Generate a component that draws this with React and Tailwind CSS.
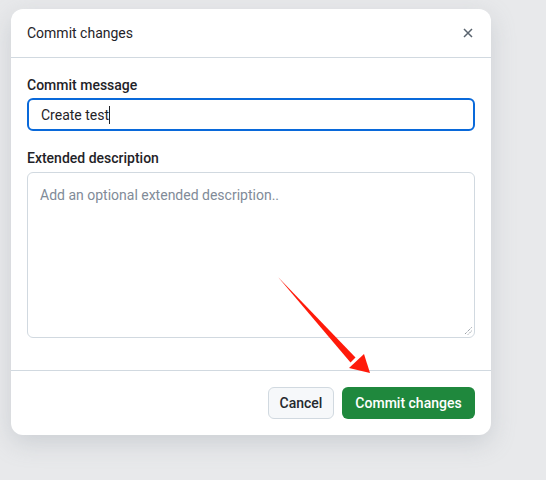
export default function App() {
  return (
    <div
      className="w-[546px] h-[480px] bg-[#e8e9eb] pt-[9px] pl-[11px]"
      style={{ fontFamily: 'Roboto, "Liberation Sans", sans-serif' }}
    >
      <div className="relative w-[480px] bg-white rounded-xl shadow-[0_8px_24px_rgba(140,149,159,0.3)] text-[#1f2328]">
        <div className="flex items-center justify-between h-[49px] px-4 border-b border-[#d1d9e0]">
          <h1 className="text-sm">Commit changes</h1>
          <button className="w-4 h-4 flex items-center justify-center text-[#59636e] -mr-[1px]">
            <svg width="10" height="10" viewBox="0 0 10 10" fill="none" stroke="currentColor" strokeWidth="1.5">
              <path d="M1 1l8 8M9 1l-8 8" />
            </svg>
          </button>
        </div>

        <div className="px-4 pt-[17px] pb-8">
          <label className="block text-sm font-medium leading-5">Commit message</label>
          <div className="mt-[3px] h-[33px] border-2 border-[#0969da] rounded-md px-3 flex items-center text-sm">
            <span>Create test</span>
            <span className="w-px h-[18px] bg-[#1f2328]" />
          </div>

          <label className="block text-sm font-medium leading-5 mt-[17px]">Extended description</label>
          <div className="relative mt-1 h-[166px] border border-[#d1d9e0] rounded-md px-3 pt-[12px] text-sm text-[#818b98]">
            Add an optional extended description..
            <svg className="absolute right-[2px] bottom-[2px]" width="9" height="9" viewBox="0 0 9 9" stroke="#6e7781" strokeWidth="1" strokeDasharray="1 1">
              <path d="M8.5 1.5l-7 7M8.5 5l-3.5 3.5" />
            </svg>
          </div>
        </div>

        <div className="flex justify-end gap-2 p-4 border-t border-[#d1d9e0]">
          <button className="h-8 w-[66px] rounded-md border border-[#d1d9e0] bg-[#f6f8fa] text-sm font-medium text-[#25292e]">
            Cancel
          </button>
          <button className="h-8 w-[133px] rounded-md bg-[#1f883d] text-sm font-medium text-white">
            Commit changes
          </button>
        </div>

        <svg className="absolute left-[256px] top-[259px] pointer-events-none" width="110" height="110" viewBox="0 0 110 110">
          <path d="M11 9 L88.5 89.5 L83.5 94.5 Z" fill="#ff1a0a" />
          <path d="M103 105 L82 100 L97 86 Z" fill="#ff1a0a" />
        </svg>
      </div>
    </div>
  );
}
